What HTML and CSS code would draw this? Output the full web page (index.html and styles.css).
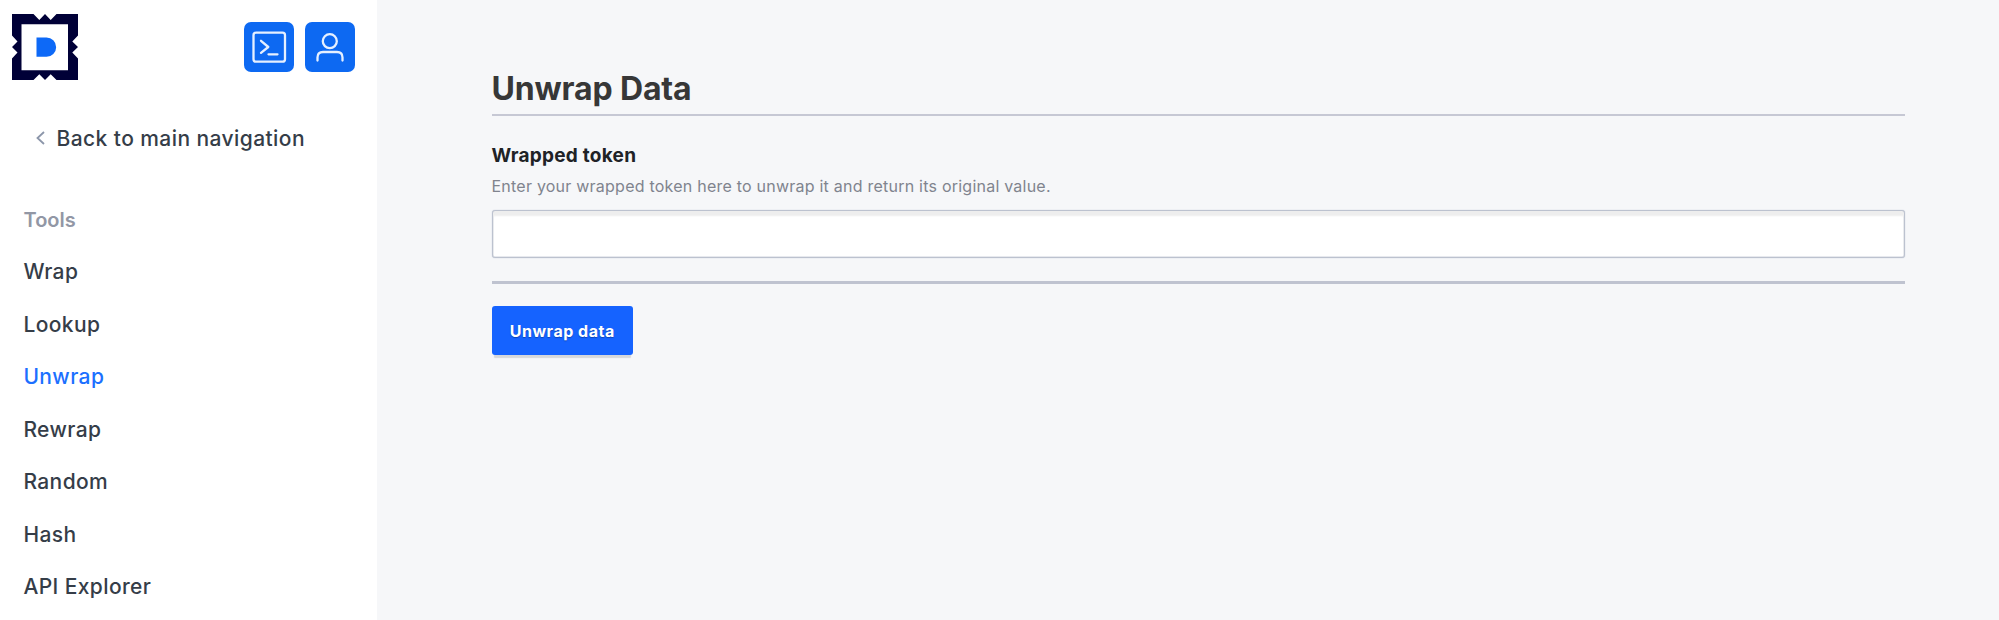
FILE: index.html
```html
<!DOCTYPE html>
<html lang="en">
<head>
<meta charset="utf-8">
<title>Unwrap Data</title>
<link rel="stylesheet" href="styles.css">
</head>
<body>
<div class="app">
  <aside class="sidebar">
    <header class="sidebar-header">
      <svg class="logo" viewBox="0 0 66 66" aria-label="Home">
        <path fill="#000037" fill-rule="evenodd" d="M0 0H21.5L27.3 6L33 0L38.7 6L44.500 0H66V21.500L60.300 27.500L66 33L60.300 38.500L66 44.500V66H44.500L38.700 60.200L33 66L27.300 60.200L21.500 66H0V44.500L5.500 38.500L0 33L5.500 27.500L0 21.500ZM9.500 10.200V56.200H56V10.200Z"/>
        <path fill="#0d69f7" d="M24.500 23.500H34.500A9.500 9.500 0 0 1 34.500 42.800H24.500Z"/>
      </svg>
      <div class="actions">
        <button class="icon-button" aria-label="Console">
          <svg viewBox="0 0 50 50"><rect x="9.500" y="10.700" width="31.500" height="29" rx="2.500"/><path d="M17 18.800L24.300 25L17 30.800M24.500 32.300H33.500"/></svg>
        </button>
        <button class="icon-button" aria-label="User menu">
          <svg viewBox="0 0 50 50"><circle cx="24.800" cy="19.200" r="7"/><path d="M12.500 38.500V35.500Q12.500 30 18 30H32Q37.500 30 37.500 35.500V38.500"/></svg>
        </button>
      </div>
    </header>
    <a class="back">
      <svg class="chevron" viewBox="0 0 10 14"><path d="M8 1L1.500 7L8 13"/></svg>
      <span>Back to main navigation</span>
    </a>
    <h2 class="nav-title">Tools</h2>
    <nav class="nav">
      <a class="nav-link">Wrap</a>
      <a class="nav-link">Lookup</a>
      <a class="nav-link active">Unwrap</a>
      <a class="nav-link">Rewrap</a>
      <a class="nav-link">Random</a>
      <a class="nav-link">Hash</a>
      <a class="nav-link">API Explorer</a>
    </nav>
  </aside>
  <main class="main">
    <h1 class="title">Unwrap Data</h1>
    <form class="form">
      <label class="label" for="token">Wrapped token</label>
      <p class="help">Enter your wrapped token here to unwrap it and return its original value.</p>
      <input class="input" id="token" type="text">
      <div class="divider"></div>
      <button class="submit" type="button">Unwrap data</button>
    </form>
  </main>
</div>
</body>
</html>
```
FILE: styles.css
```css
* { box-sizing: border-box; }
body {
  margin: 0;
  font-family: Inter, "Liberation Sans", sans-serif;
  background: #f6f7f9;
  overflow: hidden;
}
button, input { font: inherit; }
.app { display: flex; height: 620px; }
.sidebar { width: 377px; flex: none; background: #fff; color: #353d48; }
.sidebar-header {
  display: flex;
  justify-content: space-between;
  padding: 13.7px 22px 0 12.3px;
  height: 109px;
}
.logo { width: 66px; height: 66px; }
.actions { display: flex; gap: 11px; padding-top: 8.300px; }
.icon-button {
  width: 50px;
  height: 50px;
  padding: 0;
  border: 0;
  border-radius: 7px;
  background: #0d69f2;
}
.icon-button svg {
  display: block;
  fill: none;
  stroke: #e6f0ff;
  stroke-width: 2.300;
  stroke-linecap: round;
  stroke-linejoin: round;
}
.back {
  display: flex;
  align-items: center;
  gap: 11px;
  height: 58px;
  padding-left: 35.500px;
  font-size: 21px;
  font-weight: 450;
  letter-spacing: 0.420px;
}
.chevron { width: 10px; height: 14px; fill: none; stroke: #8c96aa; stroke-width: 1.800; }
.nav-title {
  margin: 27px 0 0;
  padding-left: 23.500px;
  font-size: 20px;
  font-weight: 600;
  line-height: 52px;
  color: #9297a5;
}
.nav { display: flex; flex-direction: column; padding-left: 23.400px; }
.nav-link { font-size: 21px; font-weight: 450; line-height: 52.500px; letter-spacing: 0.400px; }
.active { color: #1c70ff; }
.main { flex: 1; padding: 68px 94px 0 114.500px; }
.title {
  margin: 0;
  height: 48px;
  border-bottom: 2px solid #c6c8d4;
  font-size: 32px;
  font-weight: 700;
  line-height: 42px;
  letter-spacing: -0.150px;
  color: #373737;
}
.form { display: flex; flex-direction: column; align-items: flex-start; padding-top: 24px; }
.label {
  font-size: 19px;
  font-weight: 650;
  line-height: 31px;
  letter-spacing: 0.250px;
  color: #202226;
}
.help {
  margin: 1px 0 0;
  font-size: 16px;
  line-height: 29px;
  letter-spacing: 0.230px;
  color: #80848e;
}
.input {
  width: 100%;
  height: 48px;
  margin-top: 9px;
  padding: 0 14px;
  border: 1px solid #bcc2cf;
  border-radius: 3px;
  background: #fff;
  box-shadow: inset 0 6px 2px -1px #eee, inset 0 0 0 0.500px #d0d4dd, 0 0 1px #aeb5c5;
}
.divider { width: 100%; height: 3px; margin-top: 23px; background: #bfc3d0; }
.submit {
  height: 49px;
  width: 141.500px;
  margin-top: 22px;
  padding: 0;
  border: 0;
  border-radius: 3px;
  background: #1563ff;
  color: #fff;
  font-size: 16px;
  font-weight: 700;
  letter-spacing: 0.500px;
  text-shadow: 0 1px 1px #0d45b5;
  box-shadow: 0 5px 1px -2px #d5d7db;
}
```
